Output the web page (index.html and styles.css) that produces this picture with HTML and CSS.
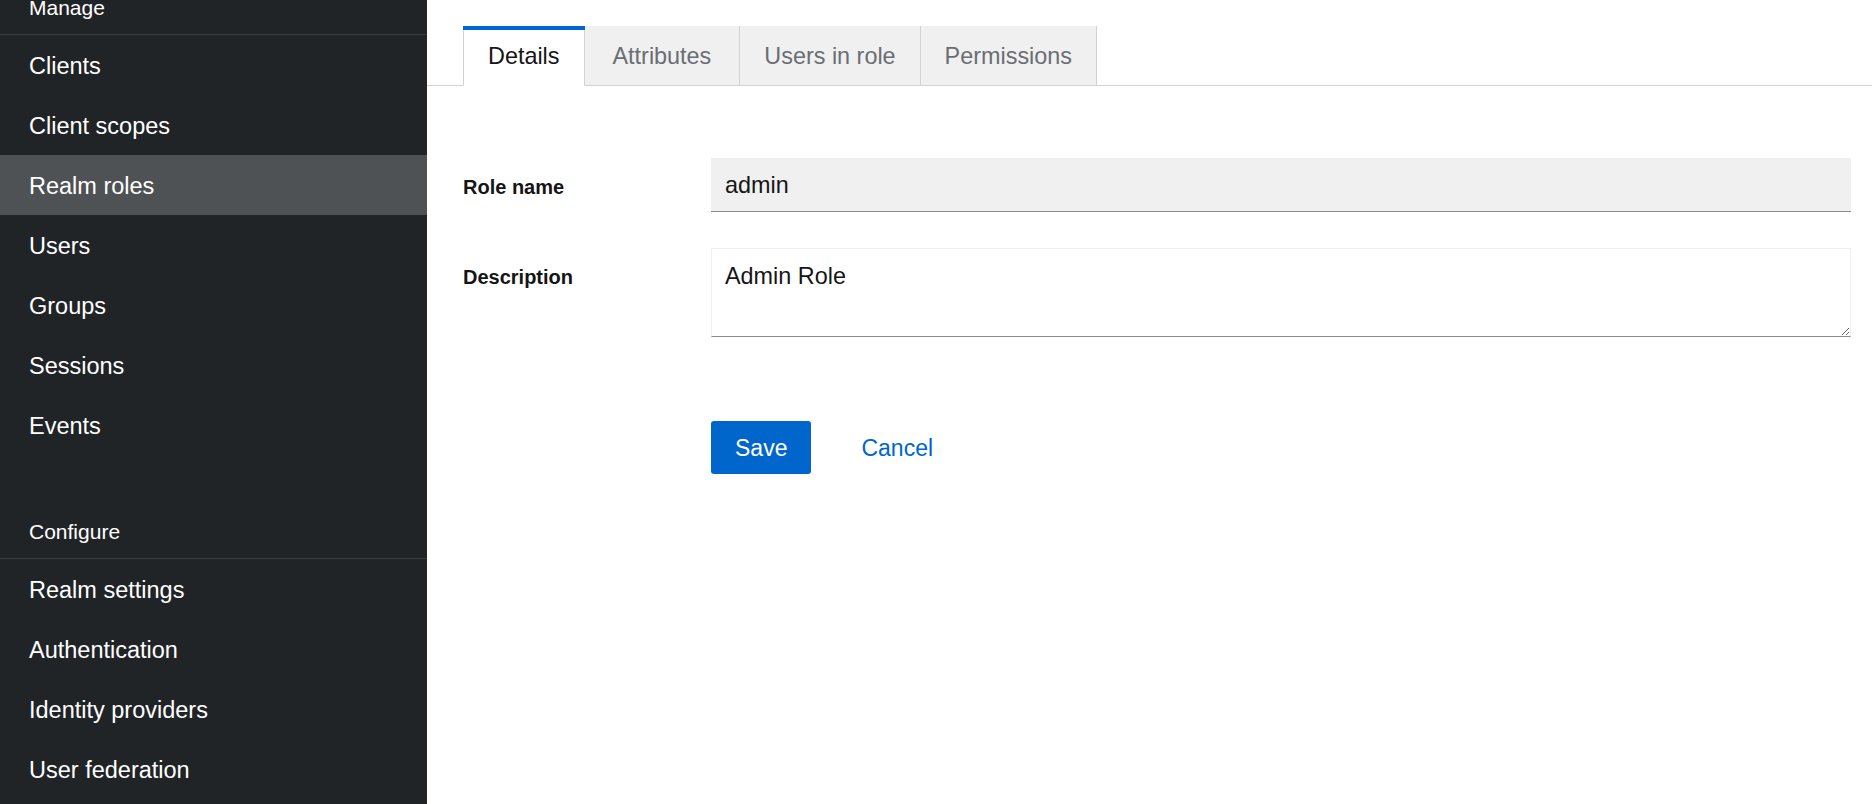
FILE: index.html
```html
<!DOCTYPE html>
<html lang="en">
<head>
<meta charset="utf-8">
<title>Realm roles - admin</title>
<link rel="stylesheet" href="styles.css">
</head>
<body>
<aside class="sidebar">
  <nav class="nav">
    <section class="nav-section">
      <div class="nav-title">Manage</div>
      <ul class="nav-list">
        <li class="nav-item">Clients</li>
        <li class="nav-item">Client scopes</li>
        <li class="nav-item is-current">Realm roles</li>
        <li class="nav-item">Users</li>
        <li class="nav-item">Groups</li>
        <li class="nav-item">Sessions</li>
        <li class="nav-item">Events</li>
      </ul>
    </section>
    <section class="nav-section">
      <div class="nav-title">Configure</div>
      <ul class="nav-list">
        <li class="nav-item">Realm settings</li>
        <li class="nav-item">Authentication</li>
        <li class="nav-item">Identity providers</li>
        <li class="nav-item">User federation</li>
      </ul>
    </section>
  </nav>
</aside>
<main class="content">
  <div class="tabs">
    <div class="tab is-active">Details</div>
    <div class="tab">Attributes</div>
    <div class="tab">Users in role</div>
    <div class="tab">Permissions</div>
  </div>
  <form class="form">
    <label class="form-label" for="role-name">Role name</label>
    <input class="form-input" id="role-name" type="text" value="admin" readonly>
    <label class="form-label" for="role-desc">Description</label>
    <textarea class="form-textarea" id="role-desc">Admin Role</textarea>
    <div class="actions">
      <button type="button" class="btn btn-primary">Save</button>
      <button type="button" class="btn btn-link">Cancel</button>
    </div>
  </form>
</main>
</body>
</html>
```

FILE: styles.css
```css
html, body {
  margin: 0;
  padding: 0;
  height: 100%;
}

body {
  display: flex;
  overflow: hidden;
  font-family: "Liberation Sans", Arial, sans-serif;
  background: #fff;
  color: #151515;
}

.sidebar {
  width: 427px;
  flex: 0 0 427px;
  background: #212427;
  color: #fff;
  overflow: hidden;
}

.nav {
  margin-top: -21px;
}

.nav-section + .nav-section {
  margin-top: 48px;
}

.nav-title {
  box-sizing: border-box;
  height: 56px;
  display: flex;
  align-items: center;
  padding: 2px 0 0 29px;
  font-size: 21px;
  border-bottom: 1px solid #3c3f42;
}

.nav-list {
  list-style: none;
  margin: 0;
  padding: 0;
}

.nav-item {
  box-sizing: border-box;
  height: 60px;
  display: flex;
  align-items: center;
  padding: 2px 0 0 29px;
  font-size: 23.5px;
}

.nav-item.is-current {
  background: #4f5255;
}

.content {
  flex: 1;
  min-width: 0;
}

.tabs {
  display: flex;
  margin-top: 26px;
  padding-left: 36px;
  border-bottom: 1px solid #d2d2d2;
}

.tab {
  position: relative;
  box-sizing: border-box;
  height: 60px;
  margin-bottom: -1px;
  padding: 1px 25px 0;
  display: flex;
  align-items: center;
  justify-content: center;
  background: #f0f0f0;
  color: #6a6e73;
  font-size: 23.4px;
  border-right: 1px solid #d2d2d2;
  border-bottom: 1px solid #d2d2d2;
}

.tab.is-active {
  background: #fff;
  color: #151515;
  border-left: 1px solid #d2d2d2;
  border-bottom-color: #fff;
  padding: 1px 24px 0;
}

.tab.is-active::before {
  content: "";
  position: absolute;
  left: -1px;
  right: -1px;
  top: 0;
  height: 4px;
  background: #06c;
}

.tab:nth-child(2) {
  padding: 1px 28px 0;
}

.tab:nth-child(3) {
  padding: 1px 24px 0;
}

.tab:nth-child(4) {
  padding: 1px 24px 0;
}

.form {
  display: grid;
  grid-template-columns: 248px 1fr;
  row-gap: 36px;
  padding: 72px 21px 0 36px;
  margin: 0;
}

.form-label {
  font-size: 20px;
  font-weight: bold;
  line-height: 30px;
  padding-top: 14px;
  color: #151515;
}

.form-input {
  box-sizing: border-box;
  height: 54px;
  width: 100%;
  margin: 0;
  padding: 1px 14px 0;
  background: #f0f0f0;
  border: none;
  border-bottom: 1px solid #8a8d90;
  font-family: inherit;
  font-size: 23.4px;
  color: #151515;
  outline: none;
}

.form-textarea {
  box-sizing: border-box;
  display: block;
  height: 89px;
  width: 100%;
  margin: 0;
  padding: 10px 13px 8px;
  background: #fff;
  border: 1px solid #f0f0f0;
  border-bottom-color: #8a8d90;
  font-family: inherit;
  font-size: 23.4px;
  line-height: 1.5;
  color: #151515;
  outline: none;
  resize: vertical;
}

.actions {
  grid-column: 2;
  margin-top: 48px;
  display: flex;
  gap: 26px;
}

.btn {
  box-sizing: border-box;
  height: 53px;
  padding: 2px 24px 0;
  border: none;
  border-radius: 3px;
  font-family: inherit;
  font-size: 23px;
  cursor: pointer;
}

.btn-primary {
  background: #06c;
  color: #fff;
}

.btn-link {
  background: transparent;
  color: #06c;
}
```
